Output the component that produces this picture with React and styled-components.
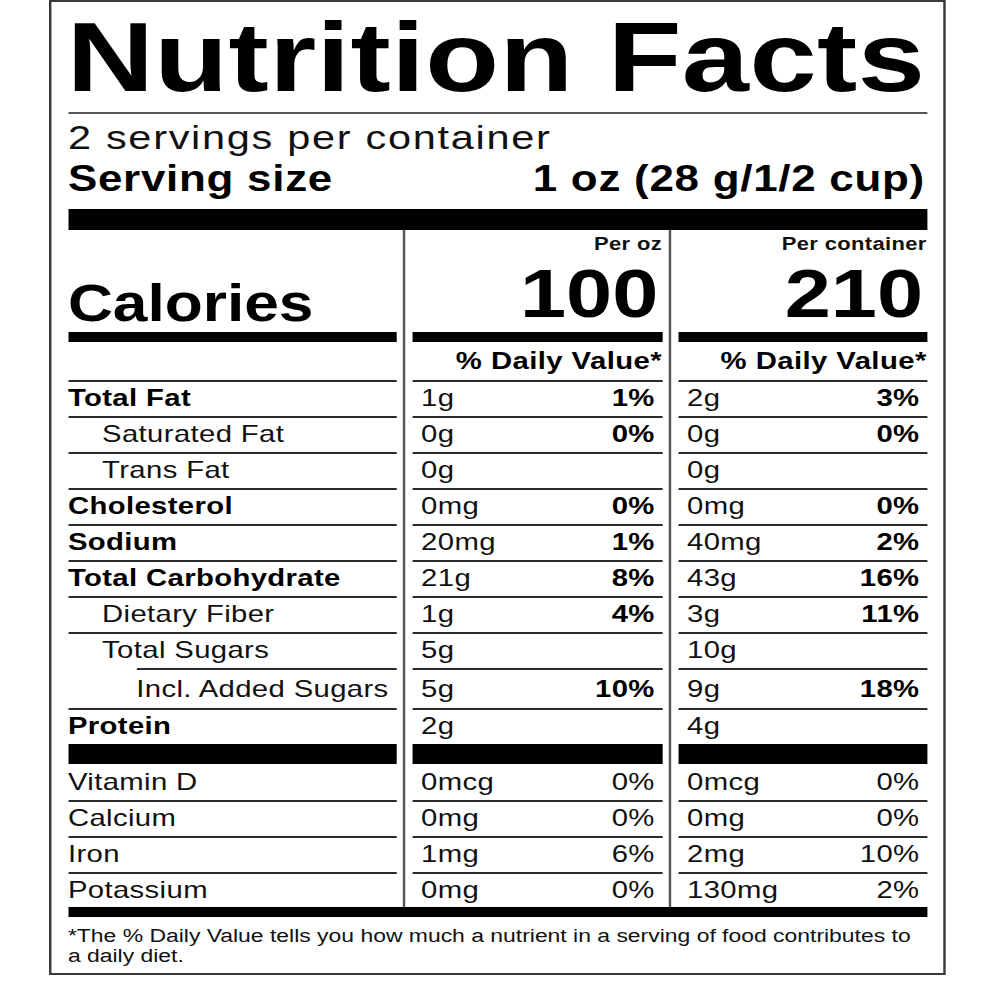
import React from "react";
import styled, { createGlobalStyle } from "styled-components";

const STRETCH = 1.22;

const GlobalStyle = createGlobalStyle`
  html, body {
    margin: 0;
    padding: 0;
    background: #ffffff;
  }
  body {
    font-family: "Liberation Sans", Arial, Helvetica, sans-serif;
    color: #000;
  }
`;

const Page = styled.main`
  padding-left: 49px;
`;

const Label = styled.section`
  box-sizing: border-box;
  width: 735px;
  border: 2px solid #3a3a3a;
  padding: 5px 13.5px 7px;
  background: #fff;
  transform: scaleX(${STRETCH});
  transform-origin: 0 0;
`;

const Title = styled.h1`
  margin: 0 0 0 -1px;
  font-size: 99px;
  line-height: 100px;
  font-weight: 700;
  letter-spacing: 0.35px;
  white-space: nowrap;
`;

const Rule = styled.div`
  height: ${(p) => p.$h}px;
  margin-top: ${(p) => p.$mt || 0}px;
  background: ${(p) => p.$color || "#000"};
`;

const Servings = styled.div`
  margin-top: 3px;
  font-size: 34px;
  line-height: 40px;
  letter-spacing: 1.4px;
  white-space: nowrap;
  color: #111;
`;

const ServingSize = styled.div`
  display: flex;
  justify-content: space-between;
  padding: 2px 1.5px 0 0;
  font-size: 36px;
  line-height: 40px;
  font-weight: 700;
  letter-spacing: 0.6px;
  white-space: nowrap;
`;

const Facts = styled.div`
  display: grid;
  grid-template-columns: 269px 13px 205px 13px 1fr;
`;

const Divider = styled.div`
  grid-column: ${(p) => p.$col};
  grid-row: 1 / span ${(p) => p.$rows};
  justify-self: center;
  width: 1.7px;
  background: #555;
`;

const HeadCell = styled.div`
  grid-column: ${(p) => p.$col};
  box-sizing: border-box;
  height: 112px;
  border-bottom: 10px solid #000;
  display: flex;
  flex-direction: column;
  justify-content: ${(p) => (p.$left ? "flex-end" : "flex-start")};
  align-items: ${(p) => (p.$left ? "flex-start" : "flex-end")};
  padding: ${(p) => (p.$left ? "0 0 3px 0" : "5px 0 0 0")};
`;

const CaloriesWord = styled.div`
  font-size: 51px;
  line-height: 51px;
  font-weight: 700;
`;

const PerLabel = styled.div`
  font-size: 18px;
  line-height: 18px;
  font-weight: 700;
  letter-spacing: 0.3px;
  color: #111;
`;

const CalorieNumber = styled.div`
  margin-top: 6px;
  padding-right: 3px;
  font-size: 68px;
  line-height: 68px;
  font-weight: 700;
`;

const DVCell = styled.div`
  grid-column: ${(p) => p.$col};
  box-sizing: border-box;
  height: 38px;
  padding-top: 3px;
  text-align: right;
  font-size: 24px;
  line-height: 32px;
  font-weight: 700;
  letter-spacing: 0.35px;
  white-space: nowrap;
`;

const Cell = styled.div`
  grid-column: ${(p) => p.$col};
  box-sizing: border-box;
  height: ${(p) => p.$h || 36}px;
  margin-left: ${(p) => p.$offset || 0}px;
  padding: ${(p) => p.$pt || 0}px ${(p) => p.$pr || 0}px 0 ${(p) => p.$pl || 0}px;
  border-top: 2px solid ${(p) => (p.$noLine ? "transparent" : "#2b2b2b")};
  display: flex;
  justify-content: space-between;
  font-size: 24px;
  line-height: 32px;
  letter-spacing: 0.3px;
  white-space: nowrap;
  color: #111;
`;

const Text = styled.span`
  font-weight: ${(p) => (p.$bold ? 700 : 400)};
  color: ${(p) => (p.$bold ? "#000" : "#111")};
`;

const BarCell = styled.div`
  grid-column: ${(p) => p.$col};
  height: 20px;
  background: #000;
`;

const Footnote = styled.p`
  margin: 9px 0 0 0;
  font-size: 18.8px;
  line-height: 20px;
  color: #111;
`;

const nutrients = [
  { name: "Total Fat", bold: true, a: ["1g", "1%"], b: ["2g", "3%"] },
  { name: "Saturated Fat", indent: 1, a: ["0g", "0%"], b: ["0g", "0%"] },
  { name: "Trans Fat", indent: 1, a: ["0g", ""], b: ["0g", ""] },
  { name: "Cholesterol", bold: true, a: ["0mg", "0%"], b: ["0mg", "0%"] },
  { name: "Sodium", bold: true, a: ["20mg", "1%"], b: ["40mg", "2%"] },
  { name: "Total Carbohydrate", bold: true, a: ["21g", "8%"], b: ["43g", "16%"] },
  { name: "Dietary Fiber", indent: 1, a: ["1g", "4%"], b: ["3g", "11%"] },
  { name: "Total Sugars", indent: 1, a: ["5g", ""], b: ["10g", ""] },
  { name: "Incl. Added Sugars", indent: 2, a: ["5g", "10%"], b: ["9g", "18%"], h: 40, pt: 3 },
  { name: "Protein", bold: true, a: ["2g", ""], b: ["4g", ""] },
];

const vitamins = [
  { name: "Vitamin D", a: ["0mcg", "0%"], b: ["0mcg", "0%"], noLine: true },
  { name: "Calcium", a: ["0mg", "0%"], b: ["0mg", "0%"] },
  { name: "Iron", a: ["1mg", "6%"], b: ["2mg", "10%"] },
  { name: "Potassium", a: ["0mg", "0%"], b: ["130mg", "2%"], h: 35 },
];

function NutrientRow({ row, boldPercent }) {
  const labelProps =
    row.indent === 2
      ? { $offset: 56 }
      : row.indent === 1
      ? { $pl: 28 }
      : {};
  return (
    <>
      <Cell $col={1} $h={row.h} $pt={row.pt} $noLine={row.noLine} {...labelProps}>
        <Text $bold={row.bold}>{row.name}</Text>
      </Cell>
      {[row.a, row.b].map((v, i) => (
        <Cell
          key={i}
          $col={i === 0 ? 3 : 5}
          $h={row.h}
          $pt={row.pt}
          $pl={7.5}
          $pr={6}
          $noLine={row.noLine}
        >
          <Text>{v[0]}</Text>
          <Text $bold={boldPercent}>{v[1]}</Text>
        </Cell>
      ))}
    </>
  );
}

export default function App() {
  const totalRows = 2 + nutrients.length + 1 + vitamins.length;
  return (
    <Page>
      <GlobalStyle />
      <Label>
        <Title>Nutrition Facts</Title>
        <Rule $h={2} $mt={5} $color="#555" />
        <Servings>2 servings per container</Servings>
        <ServingSize>
          <span>Serving size</span>
          <span>1 oz (28 g/1/2 cup)</span>
        </ServingSize>
        <Rule $h={21} $mt={10} />
        <Facts>
          <Divider $col={2} $rows={totalRows} />
          <Divider $col={4} $rows={totalRows} />

          <HeadCell $col={1} $left>
            <CaloriesWord>Calories</CaloriesWord>
          </HeadCell>
          <HeadCell $col={3}>
            <PerLabel>Per oz</PerLabel>
            <CalorieNumber>100</CalorieNumber>
          </HeadCell>
          <HeadCell $col={5}>
            <PerLabel>Per container</PerLabel>
            <CalorieNumber>210</CalorieNumber>
          </HeadCell>

          <DVCell $col={1} />
          <DVCell $col={3}>% Daily Value*</DVCell>
          <DVCell $col={5}>% Daily Value*</DVCell>

          {nutrients.map((row) => (
            <NutrientRow key={row.name} row={row} boldPercent />
          ))}

          <BarCell $col={1} />
          <BarCell $col={3} />
          <BarCell $col={5} />

          {vitamins.map((row) => (
            <NutrientRow key={row.name} row={row} />
          ))}
        </Facts>
        <Rule $h={10} />
        <Footnote>
          *The % Daily Value tells you how much a nutrient in a serving of food contributes to a daily diet.
        </Footnote>
      </Label>
    </Page>
  );
}
